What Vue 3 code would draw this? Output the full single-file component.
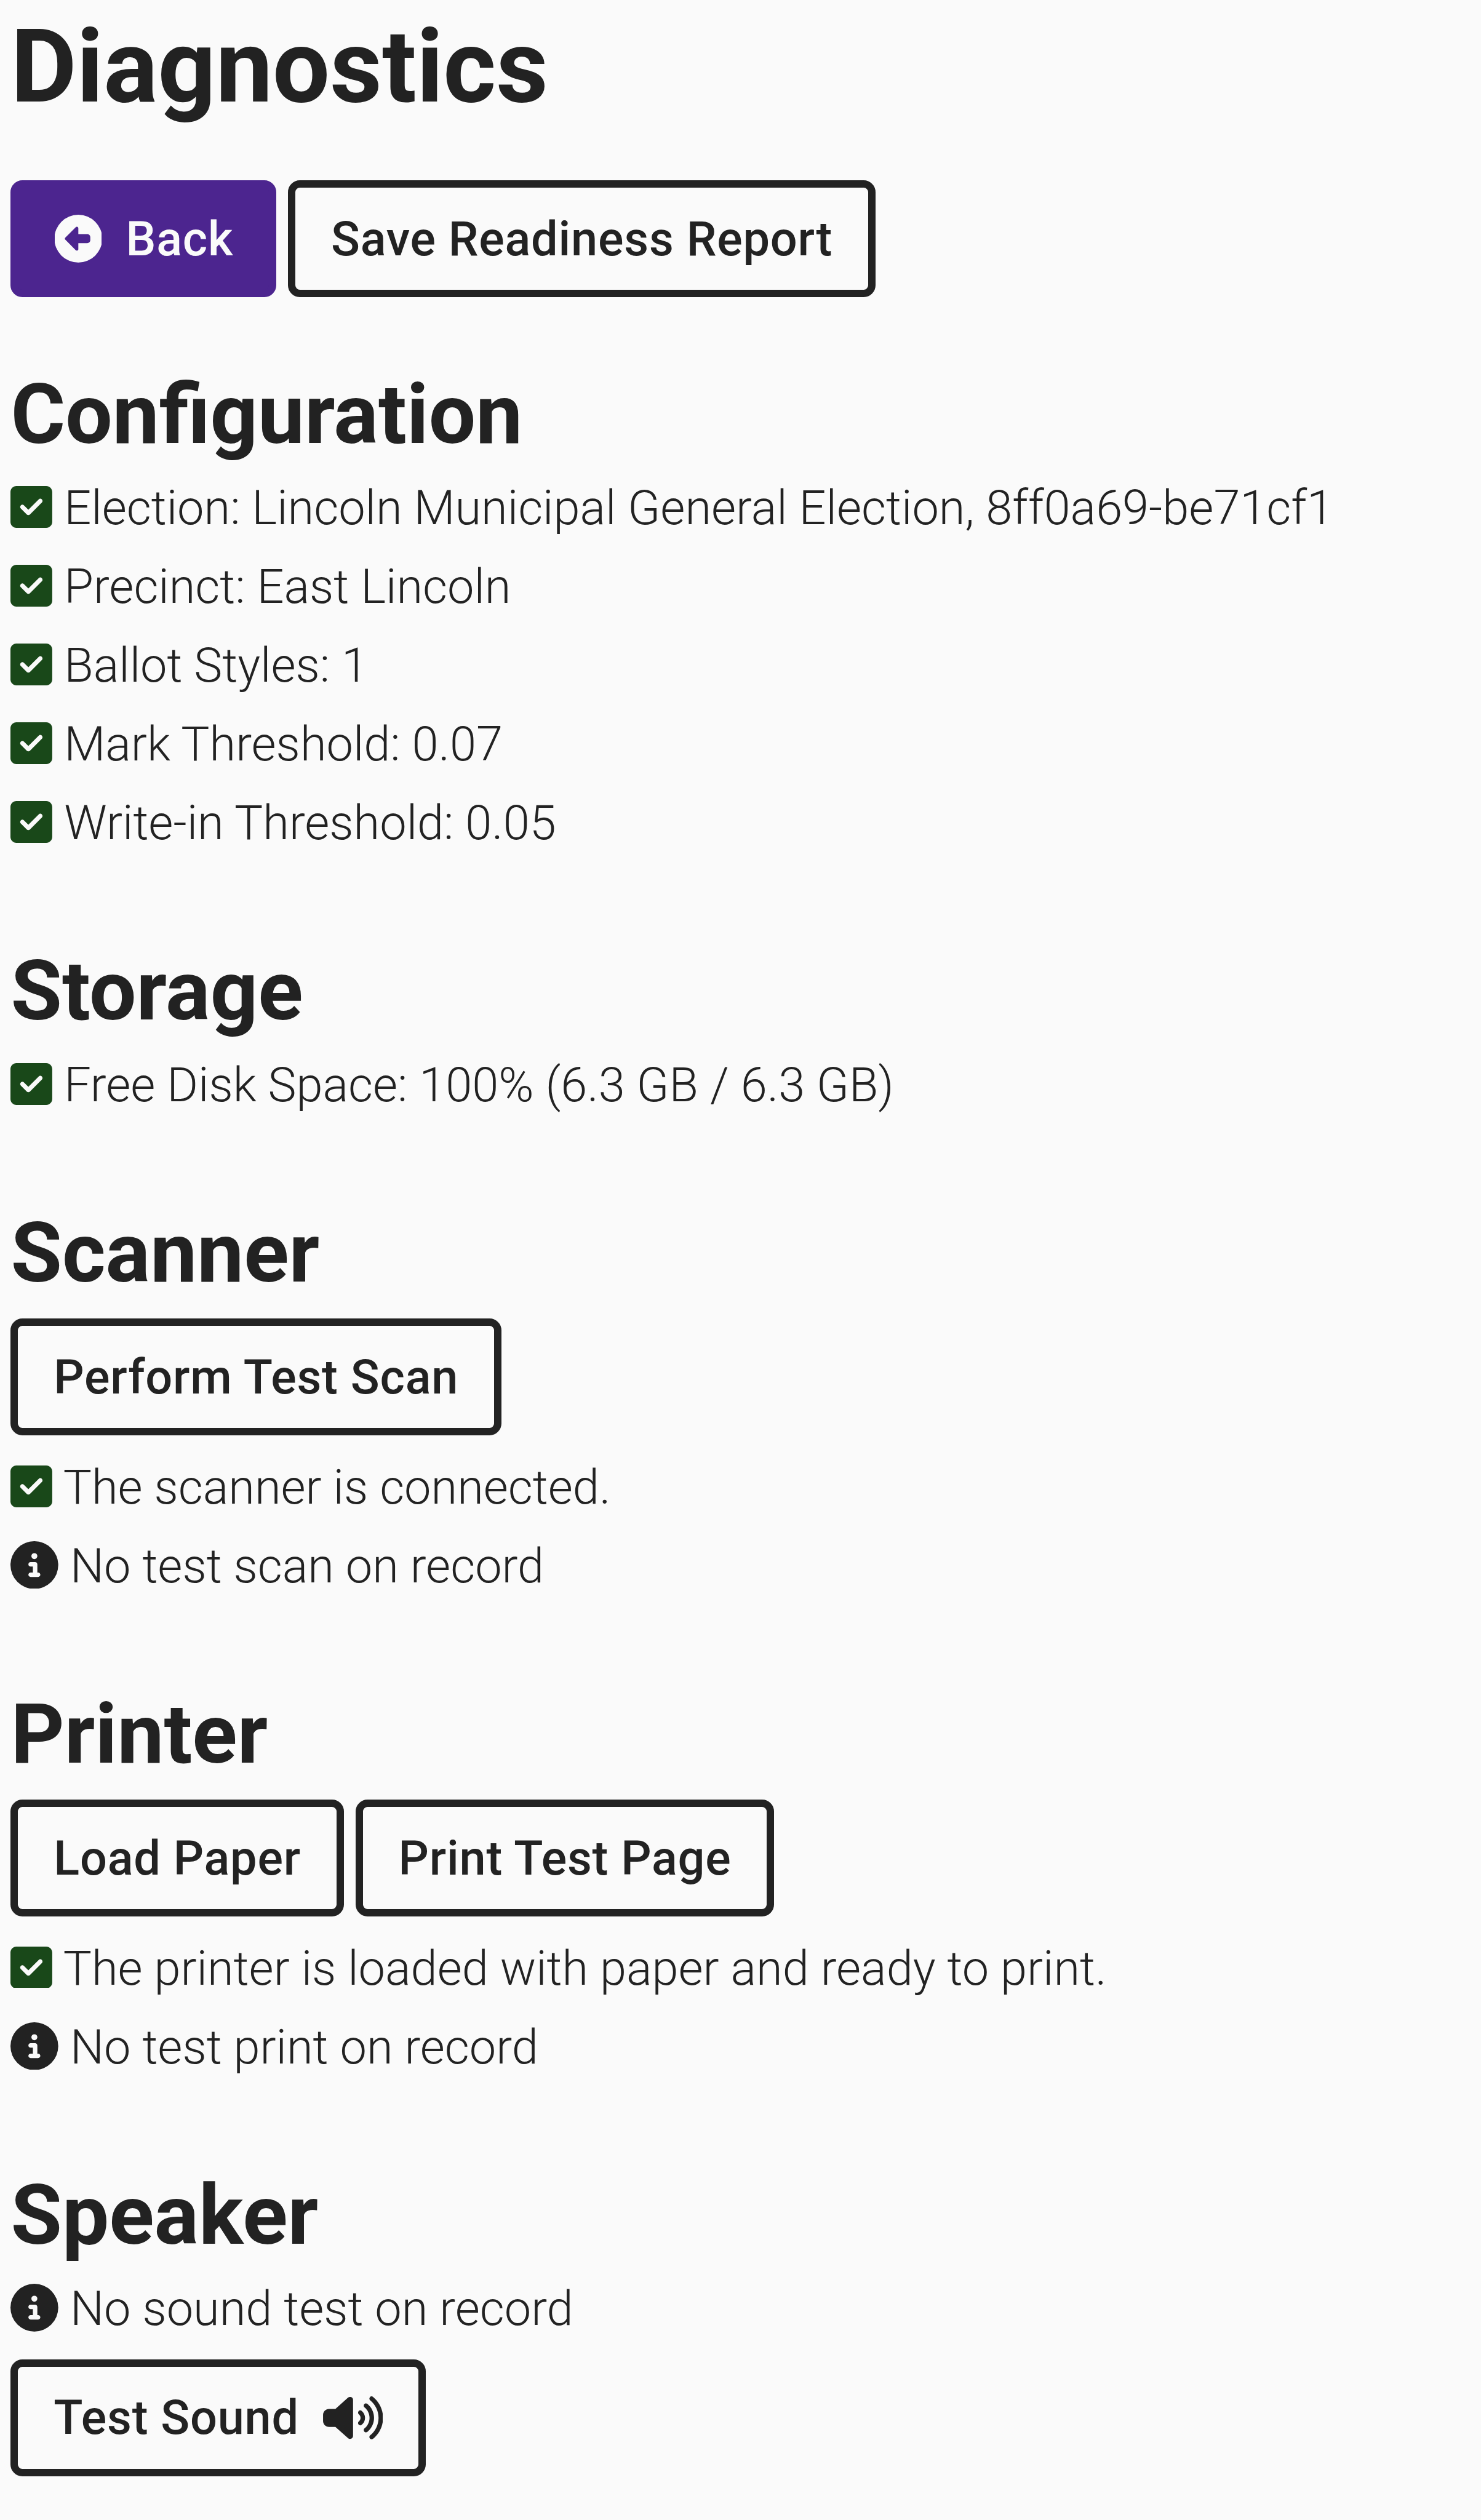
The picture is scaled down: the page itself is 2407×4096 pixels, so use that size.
<script setup>
const icons = {
  check: {
    viewBox: '0 32 448 448',
    d: 'M64 32C28.7 32 0 60.7 0 96V416c0 35.3 28.7 64 64 64H384c35.3 0 64-28.7 64-64V96c0-35.3-28.7-64-64-64H64zM337 209L209 337c-9.4 9.4-24.6 9.4-33.9 0l-64-64c-9.4-9.4-9.4-24.6 0-33.9s24.6-9.4 33.9 0l47 47L303 175c9.4-9.4 24.6-9.4 33.9 0s9.4 24.6 0 33.9z',
  },
  info: {
    viewBox: '0 0 512 512',
    d: 'M256 512A256 256 0 1 0 256 0a256 256 0 1 0 0 512zM216 336h24V272H216c-13.3 0-24-10.7-24-24s10.7-24 24-24h48c13.3 0 24 10.7 24 24v88h8c13.3 0 24 10.7 24 24s-10.7 24-24 24H216c-13.3 0-24-10.7-24-24s10.7-24 24-24zm40-208a32 32 0 1 1 0 64 32 32 0 1 1 0-64z',
  },
  back: {
    viewBox: '4 0 504 512',
    d: 'M512 256A256 256 0 1 0 0 256a256 256 0 1 0 512 0zM116.7 244.7l112-112c4.6-4.6 11.5-5.9 17.5-3.5s9.9 8.3 9.9 14.8l0 64 96 0c17.7 0 32 14.3 32 32l0 32c0 17.7-14.3 32-32 32l-96 0 0 64c0 6.5-3.9 12.3-9.9 14.8s-12.9 1.1-17.5-3.5l-112-112c-6.2-6.2-6.2-16.4 0-22.6z',
  },
  sound: {
    viewBox: '0 0 640 512',
    d: 'M533.6 32.5C598.5 85.2 640 165.8 640 256s-41.5 170.7-106.4 223.5c-10.3 8.4-25.4 6.8-33.8-3.5s-6.8-25.4 3.5-33.8C557.5 398.2 592 331.2 592 256s-34.5-142.2-88.7-186.3c-10.3-8.4-11.8-23.5-3.5-33.8s23.5-11.8 33.8-3.5zM473.1 107c43.2 35.2 70.9 88.9 70.9 149s-27.7 113.8-70.9 149c-10.3 8.4-25.4 6.8-33.8-3.5s-6.8-25.4 3.5-33.8C475.3 341.3 496 301.1 496 256s-20.7-85.3-53.2-111.8c-10.3-8.4-11.8-23.5-3.5-33.8s23.5-11.8 33.8-3.5zm-60.5 74.5C434.1 199.1 448 225.9 448 256s-13.9 56.9-35.4 74.5c-10.3 8.4-25.4 6.8-33.8-3.5s-6.8-25.4 3.5-33.8C393.1 284.4 400 271 400 256s-6.9-28.4-17.7-37.3c-10.3-8.4-11.8-23.5-3.5-33.8s23.5-11.8 33.8-3.5zM301.1 34.8C312.6 40 320 51.4 320 64V448c0 12.6-7.4 24-18.9 29.2s-25 3.1-34.4-5.3L131.8 352H64c-35.3 0-64-28.7-64-64V224c0-35.3 28.7-64 64-64h67.8L266.7 40.1c9.4-8.4 22.9-10.4 34.4-5.3z',
  },
}

const check = (text) => ({ icon: 'check', text })
const info = (text) => ({ icon: 'info', text })

const sections = [
  {
    title: 'Configuration',
    rows: [
      check('Election: Lincoln Municipal General Election, 8ff0a69-be71cf1'),
      check('Precinct: East Lincoln'),
      check('Ballot Styles: 1'),
      check('Mark Threshold: 0.07'),
      check('Write-in Threshold: 0.05'),
    ],
  },
  { title: 'Storage', rows: [check('Free Disk Space: 100% (6.3 GB / 6.3 GB)')] },
  {
    title: 'Scanner',
    actions: ['Perform Test Scan'],
    rows: [check('The scanner is connected.'), info('No test scan on record')],
  },
  {
    title: 'Printer',
    actions: ['Load Paper', 'Print Test Page'],
    rows: [
      check('The printer is loaded with paper and ready to print.'),
      info('No test print on record'),
    ],
  },
  { title: 'Speaker', rows: [info('No sound test on record')], soundTest: true },
]
</script>

<template>
  <main class="screen">
    <h1>Diagnostics</h1>
    <div class="toolbar">
      <button class="btn primary">
        <svg class="icon-back" :viewBox="icons.back.viewBox"><path :d="icons.back.d" /></svg>
        <span class="label">Back</span>
      </button>
      <button class="btn"><span class="label">Save Readiness Report</span></button>
    </div>

    <section v-for="s in sections" :key="s.title">
      <h2>{{ s.title }}</h2>
      <div v-if="s.actions" class="actions">
        <button v-for="a in s.actions" :key="a" class="btn">
          <span class="label">{{ a }}</span>
        </button>
      </div>
      <p v-for="r in s.rows" :key="r.text" class="row">
        <svg :class="['icon', r.icon]" :viewBox="icons[r.icon].viewBox"><path :d="icons[r.icon].d" /></svg>
        <span>{{ ' ' + r.text }}</span>
      </p>
      <div v-if="s.soundTest" class="actions">
        <button class="btn">
          <span class="label">Test Sound</span>
          <svg class="icon-sound" :viewBox="icons.sound.viewBox"><path :d="icons.sound.d" /></svg>
        </button>
      </div>
    </section>
  </main>
</template>

<style>
html,
body {
  margin: 0;
  background: #fafafa;
}
</style>

<style scoped>
.screen {
  box-sizing: border-box;
  height: 4096px;
  padding: 10.4px 17.45px 0;
  overflow: hidden;
  background: #fafafa;
  color: #222;
  font-family: Roboto, sans-serif;
  font-size: 77.5px;
  font-weight: 300;
  line-height: 108.5px;
}
h1,
h2,
p {
  margin: 0;
}
h1 {
  font-size: 164.9px;
  font-weight: 700;
  line-height: 198px;
  margin-bottom: 84.7px;
}
h2 {
  font-size: 135.65px;
  font-weight: 700;
  line-height: 163px;
  margin-bottom: 17.5px;
}
section {
  display: flow-root;
  margin-top: 117.05px;
}
.toolbar + section {
  margin-top: 108.7px;
}
.toolbar,
.actions {
  display: flex;
  gap: 18.9px;
}
.actions {
  padding: 7.6px 0 30.75px;
}
.row {
  display: flex;
  align-items: center;
  margin-bottom: 19.5px;
  white-space: pre;
}
svg {
  display: block;
  flex: none;
  fill: currentColor;
}
.icon {
  margin-bottom: 4.8px;
}
.check {
  width: 67.9px;
  height: 67.9px;
  color: #194819;
}
.info {
  width: 77.7px;
  height: 77.7px;
}
/* The gap above the buttons stacks on the spacing of the row or heading before them. */
.btn {
  display: flex;
  align-items: center;
  gap: 38.7px;
  box-sizing: border-box;
  height: 190px;
  padding: 0 57.9px;
  border: 12px solid #222;
  border-radius: 19.4px;
  background: transparent;
  color: #222;
  font: 500 77.5px/108.5px Roboto, sans-serif;
  letter-spacing: 0.01em;
  white-space: nowrap;
}
.primary {
  gap: 39.4px;
  background: #4c258f;
  border-color: #4c258f;
  color: #fafafa;
}
.label {
  padding-top: 2px;
}
.icon-back {
  width: 76.6px;
  height: 77.8px;
  margin-left: 1.3px;
}
.icon-sound {
  width: 97.6px;
  height: 78px;
}
</style>
